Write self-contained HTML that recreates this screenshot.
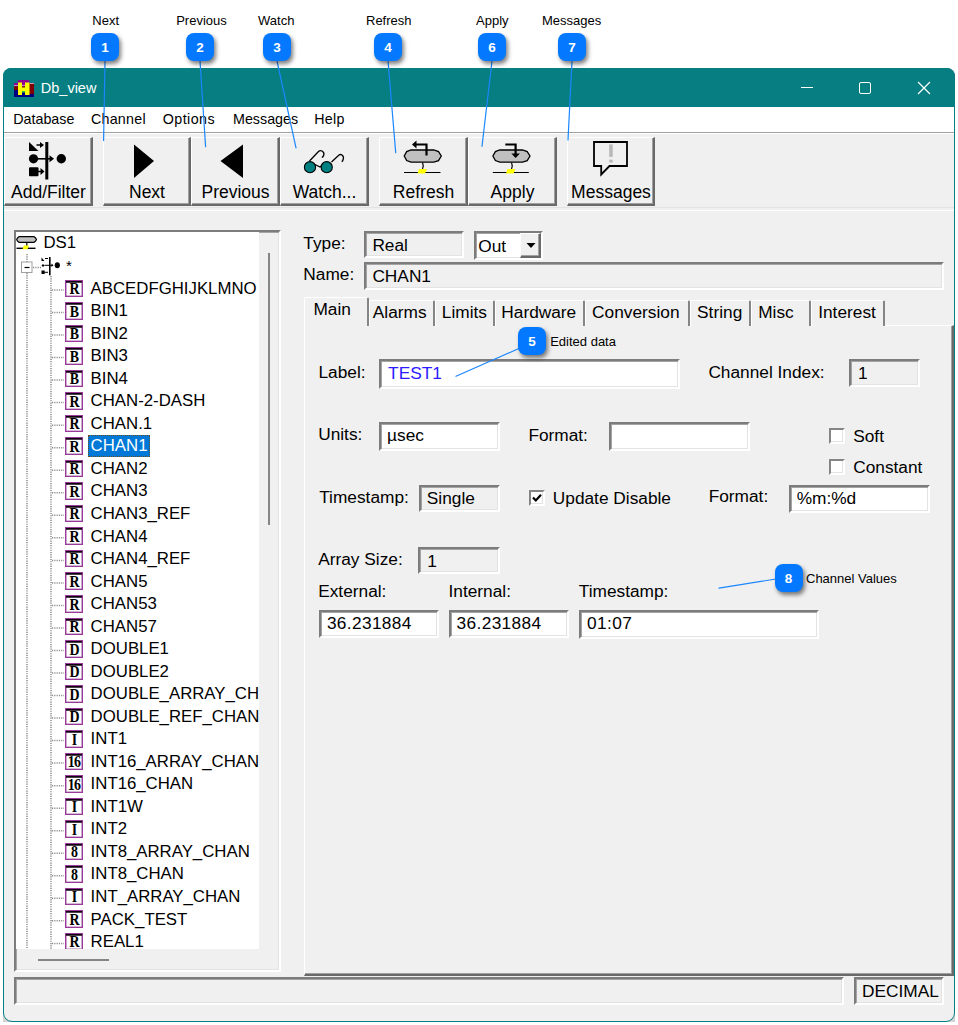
<!DOCTYPE html><html><head><meta charset="utf-8"><style>
html,body{margin:0;padding:0}
body{width:958px;height:1025px;position:relative;overflow:hidden;background:#fff;font-family:"Liberation Sans",sans-serif;color:#000}
.a{position:absolute;box-sizing:border-box}
.t{position:absolute;white-space:nowrap}
.sunk{border-style:solid;border-width:2px;border-color:#7c7c7c #fff #fff #7c7c7c;box-shadow:inset 1px 1px 0 #a4a4a4, inset -1px -1px 0 #e3e3e3}
.btn{background:#f0f0f0;border-style:solid;border-width:1px 2px 2px 1px;border-color:#fff #696969 #696969 #fff;box-shadow:inset -1px -1px 0 #a0a0a0}
svg{position:absolute;overflow:visible}
</style></head><body>

<div class="a" style="left:3px;top:1012px;width:10px;height:10px;background:#d4d4d4"></div>
<div class="a" style="left:945px;top:1012px;width:10px;height:10px;background:#d4d4d4"></div>
<div class="a" style="left:3px;top:68px;width:952px;height:954px;border:1px solid #077f82;border-radius:8px 8px 9px 9px;background:#f0f0f0;overflow:hidden"></div>
<div class="a" style="left:3px;top:68px;width:952px;height:39px;background:#077f82;border-radius:8px 8px 0 0"></div>
<div class="a" style="left:4px;top:107px;width:950px;height:25px;background:#fff"></div>
<div class="a" style="left:4px;top:132px;width:950px;height:1px;background:#a0a0a0"></div>
<div class="a" style="left:4px;top:133px;width:950px;height:1px;background:#fff"></div>
<svg style="left:14px;top:80px" width="20" height="17" viewBox="0 0 20 17">
<rect x="0" y="10" width="20" height="7" fill="#000080"/>
<rect x="0" y="3" width="20" height="3" fill="#900090"/>
<rect x="0" y="5.3" width="20" height="0.9" fill="#e0c0e0"/>
<rect x="0" y="6.2" width="20" height="3.8" fill="#800000"/>
<rect x="3.5" y="0" width="12" height="3" rx="1.5" fill="#900090"/>
<rect x="15" y="3" width="5" height="11" fill="#800000"/>
<rect x="16" y="3" width="4" height="0.8" fill="#e0c0e0"/>
<path d="M4 2.5h4v5h3v-5h4.5v12.5h-4.5v-4h-3v4h-4z" fill="#ffff00"/>
<rect x="8" y="11" width="3" height="1.5" fill="#40c040"/>
</svg>
<div class="t" style="left:40.80px;top:80.73px;font-size:14.5px;line-height:14.5px;color:#fff;">Db_view</div>
<div class="a" style="left:801px;top:87px;width:12px;height:1.2000000000000028px;background:#fff"></div>
<div class="a" style="left:859px;top:82px;width:12px;height:12px;border:1.2px solid #fff;border-radius:2px"></div>
<svg style="left:918px;top:82px" width="12" height="12" viewBox="0 0 12 12"><path d="M0 0L12 12M12 0L0 12" stroke="#fff" stroke-width="1.2"/></svg>
<div class="t" style="left:13.20px;top:112.40px;font-size:14.3px;line-height:14.3px;color:#000;letter-spacing:0px">Database</div>
<div class="t" style="left:90.90px;top:112.40px;font-size:14.3px;line-height:14.3px;color:#000;letter-spacing:0.25px">Channel</div>
<div class="t" style="left:162.70px;top:112.40px;font-size:14.3px;line-height:14.3px;color:#000;letter-spacing:0.45px">Options</div>
<div class="t" style="left:233.00px;top:112.40px;font-size:14.3px;line-height:14.3px;color:#000;letter-spacing:0px">Messages</div>
<div class="t" style="left:314.20px;top:112.40px;font-size:14.3px;line-height:14.3px;color:#000;letter-spacing:0.3px">Help</div>
<div class="a btn" style="left:4px;top:137px;width:89px;height:69px"></div>
<div class="t" style="left:4px;width:89px;text-align:center;top:183.99px;font-size:17.5px;line-height:17.5px">Add/Filter</div>
<div class="a btn" style="left:103px;top:137px;width:88px;height:69px"></div>
<div class="t" style="left:103px;width:88px;text-align:center;top:183.99px;font-size:17.5px;line-height:17.5px">Next</div>
<div class="a btn" style="left:191px;top:137px;width:89px;height:69px"></div>
<div class="t" style="left:191px;width:89px;text-align:center;top:183.99px;font-size:17.5px;line-height:17.5px">Previous</div>
<div class="a btn" style="left:280px;top:137px;width:89px;height:69px"></div>
<div class="t" style="left:280px;width:89px;text-align:center;top:183.99px;font-size:17.5px;line-height:17.5px">Watch...</div>
<div class="a btn" style="left:379px;top:137px;width:89px;height:69px"></div>
<div class="t" style="left:379px;width:89px;text-align:center;top:183.99px;font-size:17.5px;line-height:17.5px">Refresh</div>
<div class="a btn" style="left:468px;top:137px;width:89px;height:69px"></div>
<div class="t" style="left:468px;width:89px;text-align:center;top:183.99px;font-size:17.5px;line-height:17.5px">Apply</div>
<div class="a btn" style="left:567px;top:137px;width:88px;height:69px"></div>
<div class="t" style="left:567px;width:88px;text-align:center;top:183.99px;font-size:17.5px;line-height:17.5px">Messages</div>
<div class="a" style="left:4px;top:207px;width:950px;height:1px;background:#e3e3e3"></div>
<div class="a" style="left:4px;top:210px;width:950px;height:1px;background:#fff"></div>
<svg style="left:0;top:0" width="958" height="1025">
<!-- add/filter -->
<path d="M29 142L29 151L38.5 151Z" fill="#000"/>
<path d="M36.5 145H41" stroke="#000" stroke-width="1.5"/><path d="M40 142L44 145L40 148Z" fill="#000"/>
<rect x="45.3" y="142" width="3" height="37.5" fill="#000"/>
<circle cx="33.5" cy="158.8" r="4.6" fill="#000"/>
<path d="M37 158.8H51" stroke="#000" stroke-width="1.6"/><path d="M49.5 155.3L54 158.8L49.5 162.3Z" fill="#000"/>
<circle cx="61.3" cy="158.8" r="4.7" fill="#000"/>
<rect x="29" y="167.2" width="9.5" height="9" rx="1" fill="#000"/>
<path d="M37 171.5H41" stroke="#000" stroke-width="1.5"/><path d="M40.5 168L44.5 171.5L40.5 175Z" fill="#000"/>
<!-- next / previous -->
<path d="M134 144.5L154 161L134 178Z" fill="#000"/>
<path d="M243 144.5L220.5 161L243 178Z" fill="#000"/>
<!-- watch -->
<path d="M309.5 161L318.5 151.5Q320 150 322 151Q324.5 152.5 323.8 155Q323.2 157 321.8 157.5" fill="none" stroke="#000" stroke-width="1.3"/>
<path d="M331.5 162L339 155Q340.5 154 342 155Q344 156.5 343.3 159Q342.8 161 341.8 161.8" fill="none" stroke="#000" stroke-width="1.3"/>
<path d="M315 164.5L320 167L323 164.5" fill="none" stroke="#000" stroke-width="1.3"/>
<circle cx="310" cy="167.2" r="5.6" fill="#008080" stroke="#000" stroke-width="1.1"/>
<circle cx="326.7" cy="167.2" r="5.6" fill="#008080" stroke="#000" stroke-width="1.1"/>
<!-- refresh -->
<path d="M411 150H433.8L438.5 151.6L441.3 156L438.5 160.6L433.8 162.2H411L406.7 160.6L404.2 156L406.7 151.6Z" fill="#c0c0c0" stroke="#000" stroke-width="1.3"/>
<path d="M426.5 155.5V144.5H414.5" fill="none" stroke="#000" stroke-width="2.2"/>
<path d="M412 144.5L416.5 140.5V148.5Z" fill="#000"/>
<path d="M422.5 162.5Q424 166 422.5 169" fill="none" stroke="#000" stroke-width="1.2"/>
<path d="M404 172.5H440.5" stroke="#000" stroke-width="1.2"/>
<path d="M419 169H427L425 173.5H417.5Z" fill="#ffff00"/>
<!-- apply -->
<path d="M499.7 150H522.5L527.2 151.6L530 156L527.2 160.6L522.5 162.2H499.7L495.4 160.6L492.9 156L495.4 151.6Z" fill="#c0c0c0" stroke="#000" stroke-width="1.3"/>
<path d="M505.3 144.5H515.6V154" fill="none" stroke="#000" stroke-width="2.2"/>
<path d="M511.3 153.5H519.9L515.6 158Z" fill="#000"/>
<path d="M511.5 162.5Q513 166 511.5 169" fill="none" stroke="#000" stroke-width="1.2"/>
<path d="M492.8 172.5H528.8" stroke="#000" stroke-width="1.2"/>
<path d="M507.5 169H515.5L513.5 173.5H506Z" fill="#ffff00"/>
<!-- messages -->
<path d="M594 142H627V166H609.5L601.2 174.5V166H594Z" fill="none" stroke="#000" stroke-width="1.8" stroke-linejoin="miter"/>
<rect x="609.2" y="144.4" width="3.5" height="12.5" fill="#b8b8b8"/>
<rect x="609.2" y="159.7" width="3.5" height="2.8" fill="#b8b8b8"/>
</svg>
<div class="a sunk" style="left:14px;top:230px;width:267px;height:742px;background:#f0f0f0"></div>
<div class="a" style="left:16px;top:232px;width:243px;height:717px;background:#fff"></div>
<div class="a" style="left:268px;top:253px;width:2px;height:272px;background:#858585"></div>
<div class="a" style="left:38px;top:959px;width:71px;height:2px;background:#858585"></div>
<div class="a" style="left:16px;top:232px;width:243px;height:717px;overflow:hidden">
<svg style="left:0;top:0" width="243" height="718" viewBox="16 232 243 718">
<path d="M19.2 236.6H33.9L35.6 238L36.4 239.5L35.6 241L33.9 242.4H19.2L17.5 241L16.7 239.5L17.5 238Z" fill="#c0c0c0" stroke="#000" stroke-width="1.2"/>
<path d="M26.8 242.5V246" stroke="#000" stroke-width="1.2"/>
<path d="M16.5 248.3H35.5" stroke="#000" stroke-width="1.4"/>
<path d="M24 245.5H29L27.5 249.3H22.5Z" fill="#ffff00"/>
<path d="M27 254V262M27 273V950" stroke="#8a8a8a" stroke-width="1.5" stroke-dasharray="1.15 1.15"/>
<path d="M33 267.5H41" stroke="#8a8a8a" stroke-width="1.5" stroke-dasharray="1.15 1.15"/>
<rect x="21.5" y="262" width="10.5" height="10.5" fill="#fff" stroke="#a0a0a0" stroke-width="1"/>
<path d="M24.5 267.5H29.5" stroke="#000" stroke-width="1.2"/>
<!-- small filter icon -->
<path d="M41.5 257.5V261L44.5 261Z" fill="#000"/>
<path d="M45 258.5H48" stroke="#000" stroke-width="1"/>
<rect x="49" y="257" width="1.6" height="18.3" fill="#000"/>
<path d="M41.5 265.5L43 264L44.5 265.5L43 267Z" fill="#000"/>
<path d="M44.5 265.3H52" stroke="#000" stroke-width="1"/>
<path d="M51.5 263.5L53.5 265.3L51.5 267Z" fill="#000"/>
<ellipse cx="57.3" cy="265.2" rx="2.6" ry="3" fill="#000"/>
<rect x="41.5" y="270.5" width="3.2" height="3.5" fill="#000"/>
<path d="M44.5 272.3H48" stroke="#000" stroke-width="1"/>
<path d="M51 276V950" stroke="#8a8a8a" stroke-width="1.5" stroke-dasharray="1.15 1.15"/>

<path d="M52 290.0H64" stroke="#8a8a8a" stroke-width="1.5" stroke-dasharray="1.15 1.15"/>
<path d="M52 312.5H64" stroke="#8a8a8a" stroke-width="1.5" stroke-dasharray="1.15 1.15"/>
<path d="M52 335.1H64" stroke="#8a8a8a" stroke-width="1.5" stroke-dasharray="1.15 1.15"/>
<path d="M52 357.6H64" stroke="#8a8a8a" stroke-width="1.5" stroke-dasharray="1.15 1.15"/>
<path d="M52 380.1H64" stroke="#8a8a8a" stroke-width="1.5" stroke-dasharray="1.15 1.15"/>
<path d="M52 402.6H64" stroke="#8a8a8a" stroke-width="1.5" stroke-dasharray="1.15 1.15"/>
<path d="M52 425.2H64" stroke="#8a8a8a" stroke-width="1.5" stroke-dasharray="1.15 1.15"/>
<path d="M52 447.7H64" stroke="#8a8a8a" stroke-width="1.5" stroke-dasharray="1.15 1.15"/>
<path d="M52 470.2H64" stroke="#8a8a8a" stroke-width="1.5" stroke-dasharray="1.15 1.15"/>
<path d="M52 492.8H64" stroke="#8a8a8a" stroke-width="1.5" stroke-dasharray="1.15 1.15"/>
<path d="M52 515.3H64" stroke="#8a8a8a" stroke-width="1.5" stroke-dasharray="1.15 1.15"/>
<path d="M52 537.8H64" stroke="#8a8a8a" stroke-width="1.5" stroke-dasharray="1.15 1.15"/>
<path d="M52 560.4H64" stroke="#8a8a8a" stroke-width="1.5" stroke-dasharray="1.15 1.15"/>
<path d="M52 582.9H64" stroke="#8a8a8a" stroke-width="1.5" stroke-dasharray="1.15 1.15"/>
<path d="M52 605.4H64" stroke="#8a8a8a" stroke-width="1.5" stroke-dasharray="1.15 1.15"/>
<path d="M52 628.0H64" stroke="#8a8a8a" stroke-width="1.5" stroke-dasharray="1.15 1.15"/>
<path d="M52 650.5H64" stroke="#8a8a8a" stroke-width="1.5" stroke-dasharray="1.15 1.15"/>
<path d="M52 673.0H64" stroke="#8a8a8a" stroke-width="1.5" stroke-dasharray="1.15 1.15"/>
<path d="M52 695.5H64" stroke="#8a8a8a" stroke-width="1.5" stroke-dasharray="1.15 1.15"/>
<path d="M52 718.1H64" stroke="#8a8a8a" stroke-width="1.5" stroke-dasharray="1.15 1.15"/>
<path d="M52 740.6H64" stroke="#8a8a8a" stroke-width="1.5" stroke-dasharray="1.15 1.15"/>
<path d="M52 763.1H64" stroke="#8a8a8a" stroke-width="1.5" stroke-dasharray="1.15 1.15"/>
<path d="M52 785.7H64" stroke="#8a8a8a" stroke-width="1.5" stroke-dasharray="1.15 1.15"/>
<path d="M52 808.2H64" stroke="#8a8a8a" stroke-width="1.5" stroke-dasharray="1.15 1.15"/>
<path d="M52 830.7H64" stroke="#8a8a8a" stroke-width="1.5" stroke-dasharray="1.15 1.15"/>
<path d="M52 853.2H64" stroke="#8a8a8a" stroke-width="1.5" stroke-dasharray="1.15 1.15"/>
<path d="M52 875.8H64" stroke="#8a8a8a" stroke-width="1.5" stroke-dasharray="1.15 1.15"/>
<path d="M52 898.3H64" stroke="#8a8a8a" stroke-width="1.5" stroke-dasharray="1.15 1.15"/>
<path d="M52 920.8H64" stroke="#8a8a8a" stroke-width="1.5" stroke-dasharray="1.15 1.15"/>
<path d="M52 943.4H64" stroke="#8a8a8a" stroke-width="1.5" stroke-dasharray="1.15 1.15"/>
</svg>
<div class="a ic" style="left:49px;top:47.60px"><span>R</span></div>
<div class="t" style="left:74.60px;top:48.68px;font-size:16.8px;line-height:16.8px;">ABCEDFGHIJKLMNO</div>
<div class="a ic" style="left:49px;top:70.13px"><span>B</span></div>
<div class="t" style="left:74.60px;top:71.21px;font-size:16.8px;line-height:16.8px;">BIN1</div>
<div class="a ic" style="left:49px;top:92.66px"><span>B</span></div>
<div class="t" style="left:74.60px;top:93.74px;font-size:16.8px;line-height:16.8px;">BIN2</div>
<div class="a ic" style="left:49px;top:115.19px"><span>B</span></div>
<div class="t" style="left:74.60px;top:116.27px;font-size:16.8px;line-height:16.8px;">BIN3</div>
<div class="a ic" style="left:49px;top:137.72px"><span>B</span></div>
<div class="t" style="left:74.60px;top:138.80px;font-size:16.8px;line-height:16.8px;">BIN4</div>
<div class="a ic" style="left:49px;top:160.25px"><span>R</span></div>
<div class="t" style="left:74.60px;top:161.33px;font-size:16.8px;line-height:16.8px;">CHAN-2-DASH</div>
<div class="a ic" style="left:49px;top:182.78px"><span>R</span></div>
<div class="t" style="left:74.60px;top:183.86px;font-size:16.8px;line-height:16.8px;">CHAN.1</div>
<div class="a ic" style="left:49px;top:205.31px"><span>R</span></div>
<div class="a" style="left:72px;top:202.81px;width:61.5px;height:22px;background:#0078d7;border:1px dotted #6a5020"></div>
<div class="t" style="left:74.60px;top:206.39px;font-size:16.8px;line-height:16.8px;color:#fff;">CHAN1</div>
<div class="a ic" style="left:49px;top:227.84px"><span>R</span></div>
<div class="t" style="left:74.60px;top:228.92px;font-size:16.8px;line-height:16.8px;">CHAN2</div>
<div class="a ic" style="left:49px;top:250.37px"><span>R</span></div>
<div class="t" style="left:74.60px;top:251.45px;font-size:16.8px;line-height:16.8px;">CHAN3</div>
<div class="a ic" style="left:49px;top:272.90px"><span>R</span></div>
<div class="t" style="left:74.60px;top:273.98px;font-size:16.8px;line-height:16.8px;">CHAN3_REF</div>
<div class="a ic" style="left:49px;top:295.43px"><span>R</span></div>
<div class="t" style="left:74.60px;top:296.51px;font-size:16.8px;line-height:16.8px;">CHAN4</div>
<div class="a ic" style="left:49px;top:317.96px"><span>R</span></div>
<div class="t" style="left:74.60px;top:319.04px;font-size:16.8px;line-height:16.8px;">CHAN4_REF</div>
<div class="a ic" style="left:49px;top:340.49px"><span>R</span></div>
<div class="t" style="left:74.60px;top:341.57px;font-size:16.8px;line-height:16.8px;">CHAN5</div>
<div class="a ic" style="left:49px;top:363.02px"><span>R</span></div>
<div class="t" style="left:74.60px;top:364.10px;font-size:16.8px;line-height:16.8px;">CHAN53</div>
<div class="a ic" style="left:49px;top:385.55px"><span>R</span></div>
<div class="t" style="left:74.60px;top:386.63px;font-size:16.8px;line-height:16.8px;">CHAN57</div>
<div class="a ic" style="left:49px;top:408.08px"><span>D</span></div>
<div class="t" style="left:74.60px;top:409.16px;font-size:16.8px;line-height:16.8px;">DOUBLE1</div>
<div class="a ic" style="left:49px;top:430.61px"><span>D</span></div>
<div class="t" style="left:74.60px;top:431.69px;font-size:16.8px;line-height:16.8px;">DOUBLE2</div>
<div class="a ic" style="left:49px;top:453.14px"><span>D</span></div>
<div class="t" style="left:74.60px;top:454.22px;font-size:16.8px;line-height:16.8px;">DOUBLE_ARRAY_CHAN</div>
<div class="a ic" style="left:49px;top:475.67px"><span>D</span></div>
<div class="t" style="left:74.60px;top:476.75px;font-size:16.8px;line-height:16.8px;">DOUBLE_REF_CHAN</div>
<div class="a ic" style="left:49px;top:498.20px"><span>I</span></div>
<div class="t" style="left:74.60px;top:499.28px;font-size:16.8px;line-height:16.8px;">INT1</div>
<div class="a ic" style="left:49px;top:520.73px"><span>16</span></div>
<div class="t" style="left:74.60px;top:521.81px;font-size:16.8px;line-height:16.8px;">INT16_ARRAY_CHAN</div>
<div class="a ic" style="left:49px;top:543.26px"><span>16</span></div>
<div class="t" style="left:74.60px;top:544.34px;font-size:16.8px;line-height:16.8px;">INT16_CHAN</div>
<div class="a ic" style="left:49px;top:565.79px"><span>I</span></div>
<div class="t" style="left:74.60px;top:566.87px;font-size:16.8px;line-height:16.8px;">INT1W</div>
<div class="a ic" style="left:49px;top:588.32px"><span>I</span></div>
<div class="t" style="left:74.60px;top:589.40px;font-size:16.8px;line-height:16.8px;">INT2</div>
<div class="a ic" style="left:49px;top:610.85px"><span>8</span></div>
<div class="t" style="left:74.60px;top:611.93px;font-size:16.8px;line-height:16.8px;">INT8_ARRAY_CHAN</div>
<div class="a ic" style="left:49px;top:633.38px"><span>8</span></div>
<div class="t" style="left:74.60px;top:634.46px;font-size:16.8px;line-height:16.8px;">INT8_CHAN</div>
<div class="a ic" style="left:49px;top:655.91px"><span>I</span></div>
<div class="t" style="left:74.60px;top:656.99px;font-size:16.8px;line-height:16.8px;">INT_ARRAY_CHAN</div>
<div class="a ic" style="left:49px;top:678.44px"><span>R</span></div>
<div class="t" style="left:74.60px;top:679.52px;font-size:16.8px;line-height:16.8px;">PACK_TEST</div>
<div class="a ic" style="left:49px;top:700.97px"><span>R</span></div>
<div class="t" style="left:74.60px;top:702.05px;font-size:16.8px;line-height:16.8px;">REAL1</div>
<div class="t" style="left:27.50px;top:3.28px;font-size:16.8px;line-height:16.8px;">DS1</div>
<div class="t" style="left:50.00px;top:26.30px;font-size:15px;line-height:15px;">*</div>
</div>
<div class="t" style="left:303.30px;top:234.86px;font-size:17.3px;line-height:17.3px;">Type:</div>
<div class="a sunk" style="left:364px;top:231px;width:100px;height:27px;background:#f0f0f0"></div>
<div class="t" style="left:372.40px;top:237.36px;font-size:17.3px;line-height:17.3px;">Real</div>
<div class="a sunk" style="left:474px;top:231px;width:69px;height:29px;background:#fff"></div>
<div class="a btn" style="left:520px;top:233px;width:21px;height:25px"></div>
<svg style="left:0;top:0" width="958" height="1025"><path d="M526.5 243H535.5L531 248Z" fill="#000"/></svg>
<div class="t" style="left:478.30px;top:238.16px;font-size:17.3px;line-height:17.3px;">Out</div>
<div class="t" style="left:303.30px;top:266.16px;font-size:17.3px;line-height:17.3px;">Name:</div>
<div class="a sunk" style="left:364px;top:262px;width:580px;height:28px;background:#f0f0f0"></div>
<div class="t" style="left:372.40px;top:267.66px;font-size:17.3px;line-height:17.3px;">CHAN1</div>
<div class="a" style="left:304px;top:325px;width:650px;height:651px;border-style:solid;border-width:1px 2px 2px 1px;border-color:#fff #696969 #696969 #fff;box-shadow:inset -1px -1px 0 #a0a0a0"></div>
<div class="a" style="left:304px;top:297px;width:65px;height:29px;background:#f0f0f0;border-style:solid;border-width:1px 2px 0 1px;border-color:#fff #858585 #f0f0f0 #fff;border-radius:2px 2px 0 0"></div>
<div class="t" style="left:313.40px;top:300.66px;font-size:17.3px;line-height:17.3px;">Main</div>
<div class="a" style="left:369px;top:300px;width:66px;height:26px;background:#f0f0f0;border-style:solid;border-width:1px 2px 0 1px;border-color:#fff #858585 #f0f0f0 #fff;border-radius:2px 2px 0 0"></div>
<div class="t" style="left:372.80px;top:303.86px;font-size:17.3px;line-height:17.3px;">Alarms</div>
<div class="a" style="left:435px;top:300px;width:60px;height:26px;background:#f0f0f0;border-style:solid;border-width:1px 2px 0 1px;border-color:#fff #858585 #f0f0f0 #fff;border-radius:2px 2px 0 0"></div>
<div class="t" style="left:441.80px;top:303.86px;font-size:17.3px;line-height:17.3px;">Limits</div>
<div class="a" style="left:495px;top:300px;width:90px;height:26px;background:#f0f0f0;border-style:solid;border-width:1px 2px 0 1px;border-color:#fff #858585 #f0f0f0 #fff;border-radius:2px 2px 0 0"></div>
<div class="t" style="left:501.30px;top:303.86px;font-size:17.3px;line-height:17.3px;">Hardware</div>
<div class="a" style="left:585px;top:300px;width:105px;height:26px;background:#f0f0f0;border-style:solid;border-width:1px 2px 0 1px;border-color:#fff #858585 #f0f0f0 #fff;border-radius:2px 2px 0 0"></div>
<div class="t" style="left:592.10px;top:303.86px;font-size:17.3px;line-height:17.3px;">Conversion</div>
<div class="a" style="left:690px;top:300px;width:61px;height:26px;background:#f0f0f0;border-style:solid;border-width:1px 2px 0 1px;border-color:#fff #858585 #f0f0f0 #fff;border-radius:2px 2px 0 0"></div>
<div class="t" style="left:697.10px;top:303.86px;font-size:17.3px;line-height:17.3px;">String</div>
<div class="a" style="left:751px;top:300px;width:60px;height:26px;background:#f0f0f0;border-style:solid;border-width:1px 2px 0 1px;border-color:#fff #858585 #f0f0f0 #fff;border-radius:2px 2px 0 0"></div>
<div class="t" style="left:758.20px;top:303.86px;font-size:17.3px;line-height:17.3px;">Misc</div>
<div class="a" style="left:811px;top:300px;width:74px;height:26px;background:#f0f0f0;border-style:solid;border-width:1px 2px 0 1px;border-color:#fff #858585 #f0f0f0 #fff;border-radius:2px 2px 0 0"></div>
<div class="t" style="left:818.20px;top:303.86px;font-size:17.3px;line-height:17.3px;">Interest</div>
<div class="t" style="left:318.50px;top:363.86px;font-size:17.3px;line-height:17.3px;">Label:</div>
<div class="a sunk" style="left:379px;top:359px;width:301px;height:30px;background:#fff"></div>
<div class="t" style="left:388.10px;top:365.36px;font-size:17.3px;line-height:17.3px;color:#2a1aff;">TEST1</div>
<div class="t" style="left:708.40px;top:363.86px;font-size:17.3px;line-height:17.3px;">Channel Index:</div>
<div class="a sunk" style="left:849px;top:359px;width:71px;height:28px;background:#f0f0f0"></div>
<div class="t" style="left:858.00px;top:364.86px;font-size:17.3px;line-height:17.3px;">1</div>
<div class="t" style="left:318.20px;top:426.26px;font-size:17.3px;line-height:17.3px;">Units:</div>
<div class="a sunk" style="left:379px;top:422px;width:121px;height:29px;background:#fff"></div>
<div class="t" style="left:387.10px;top:427.36px;font-size:17.3px;line-height:17.3px;">µsec</div>
<div class="t" style="left:528.40px;top:426.66px;font-size:17.3px;line-height:17.3px;">Format:</div>
<div class="a sunk" style="left:609px;top:422px;width:141px;height:29px;background:#fff"></div>
<div class="a" style="left:829px;top:428px;width:16px;height:16px;background:#fff;border-style:solid;border-width:2px;border-color:#858585 #fff #fff #858585;box-shadow:inset -1px -1px 0 #e3e3e3"></div>
<div class="t" style="left:853.20px;top:427.96px;font-size:17.3px;line-height:17.3px;">Soft</div>
<div class="a" style="left:829px;top:459px;width:16px;height:16px;background:#fff;border-style:solid;border-width:2px;border-color:#858585 #fff #fff #858585;box-shadow:inset -1px -1px 0 #e3e3e3"></div>
<div class="t" style="left:853.20px;top:459.36px;font-size:17.3px;line-height:17.3px;">Constant</div>
<div class="t" style="left:319.20px;top:488.66px;font-size:17.3px;line-height:17.3px;">Timestamp:</div>
<div class="a sunk" style="left:419px;top:485px;width:81px;height:27px;background:#f0f0f0"></div>
<div class="t" style="left:426.80px;top:490.36px;font-size:17.3px;line-height:17.3px;">Single</div>
<div class="a" style="left:529px;top:490px;width:16px;height:16px;background:#fff;border-style:solid;border-width:2px;border-color:#858585 #fff #fff #858585;box-shadow:inset -1px -1px 0 #e3e3e3"></div>
<svg style="left:529px;top:490px" width="16" height="16"><path d="M4 7.5L6.8 10.5L12 4.8" fill="none" stroke="#000" stroke-width="2.2"/></svg>
<div class="t" style="left:552.80px;top:490.36px;font-size:17.3px;line-height:17.3px;">Update Disable</div>
<div class="t" style="left:708.70px;top:487.96px;font-size:17.3px;line-height:17.3px;">Format:</div>
<div class="a sunk" style="left:789px;top:485px;width:141px;height:28px;background:#fff"></div>
<div class="t" style="left:796.70px;top:489.66px;font-size:17.3px;line-height:17.3px;">%m:%d</div>
<div class="t" style="left:318.20px;top:551.06px;font-size:17.3px;line-height:17.3px;">Array Size:</div>
<div class="a sunk" style="left:418px;top:547px;width:82px;height:27px;background:#f0f0f0"></div>
<div class="t" style="left:427.20px;top:552.86px;font-size:17.3px;line-height:17.3px;">1</div>
<div class="t" style="left:318.20px;top:582.66px;font-size:17.3px;line-height:17.3px;">External:</div>
<div class="t" style="left:448.50px;top:582.66px;font-size:17.3px;line-height:17.3px;">Internal:</div>
<div class="t" style="left:578.80px;top:582.66px;font-size:17.3px;line-height:17.3px;">Timestamp:</div>
<div class="a sunk" style="left:319px;top:610px;width:120px;height:28px;background:#fff"></div>
<div class="t" style="left:326.90px;top:614.86px;font-size:17.3px;line-height:17.3px;letter-spacing:0.35px">36.231884</div>
<div class="a sunk" style="left:449px;top:610px;width:120px;height:28px;background:#fff"></div>
<div class="t" style="left:456.60px;top:614.86px;font-size:17.3px;line-height:17.3px;letter-spacing:0.35px">36.231884</div>
<div class="a sunk" style="left:579px;top:610px;width:240px;height:29px;background:#fff"></div>
<div class="t" style="left:587.10px;top:614.86px;font-size:17.3px;line-height:17.3px;letter-spacing:0.35px">01:07</div>
<div class="a sunk" style="left:14px;top:977px;width:830px;height:28px;background:#f0f0f0"></div>
<div class="a sunk" style="left:854px;top:977px;width:90px;height:28px;background:#f0f0f0"></div>
<div class="t" style="left:862.00px;top:982.66px;font-size:17.3px;line-height:17.3px;">DECIMAL</div>
<div class="t" style="left:92.30px;top:13.90px;font-size:13px;line-height:13px;">Next</div>
<div class="t" style="left:176.20px;top:13.90px;font-size:13px;line-height:13px;">Previous</div>
<div class="t" style="left:258.00px;top:13.90px;font-size:13px;line-height:13px;">Watch</div>
<div class="t" style="left:366.00px;top:13.90px;font-size:13px;line-height:13px;">Refresh</div>
<div class="t" style="left:476.00px;top:13.90px;font-size:13px;line-height:13px;">Apply</div>
<div class="t" style="left:542.00px;top:13.90px;font-size:13px;line-height:13px;">Messages</div>
<svg style="left:0;top:0" width="958" height="1025"><path d="M105 61L103.6 140.5" stroke="#1a86ff" stroke-width="1.2" stroke-linecap="round"/><path d="M200 61L205.6 146.7" stroke="#1a86ff" stroke-width="1.2" stroke-linecap="round"/><path d="M277 61L296 147.8" stroke="#1a86ff" stroke-width="1.2" stroke-linecap="round"/><path d="M388 61L395.7 152.6" stroke="#1a86ff" stroke-width="1.2" stroke-linecap="round"/><path d="M492 61L482 146.3" stroke="#1a86ff" stroke-width="1.2" stroke-linecap="round"/><path d="M572 61L568 140" stroke="#1a86ff" stroke-width="1.2" stroke-linecap="round"/><path d="M520 348L456 376.3" stroke="#1a86ff" stroke-width="1.2" stroke-linecap="round"/><path d="M776 579L719 588.2" stroke="#1a86ff" stroke-width="1.2" stroke-linecap="round"/></svg>
<div class="a badge" style="left:91px;top:33px">1</div>
<div class="a badge" style="left:186px;top:33px">2</div>
<div class="a badge" style="left:263px;top:33px">3</div>
<div class="a badge" style="left:374px;top:33px">4</div>
<div class="a badge" style="left:478px;top:33px">6</div>
<div class="a badge" style="left:558px;top:33px">7</div>
<div class="a badge" style="left:518px;top:327px">5</div>
<div class="a badge" style="left:774.5px;top:564px">8</div>
<div class="t" style="left:550.20px;top:334.70px;font-size:13px;line-height:13px;">Edited data</div>
<div class="t" style="left:806.00px;top:572.00px;font-size:13px;line-height:13px;">Channel Values</div>
<style>
.badge{width:28px;height:28px;border-radius:8px;background:#0479ff;color:#fff;font-size:13.5px;font-weight:bold;line-height:30px;text-align:center;box-shadow:2px 3px 4px rgba(0,0,0,.5)}
.ic{width:18px;height:17.5px;border:1px solid #9a3a9a;background:#fff;box-shadow:inset 0 1.7px 0 #100010, inset 0 0 0 0.6px #b070b0;text-align:center}
.ic span{position:absolute;left:-2px;right:-2px;top:-0.5px;font-family:"Liberation Serif",serif;font-weight:bold;font-size:17.4px;line-height:17.4px;letter-spacing:-1px;transform:scaleX(.8)}
</style>
</body></html>
